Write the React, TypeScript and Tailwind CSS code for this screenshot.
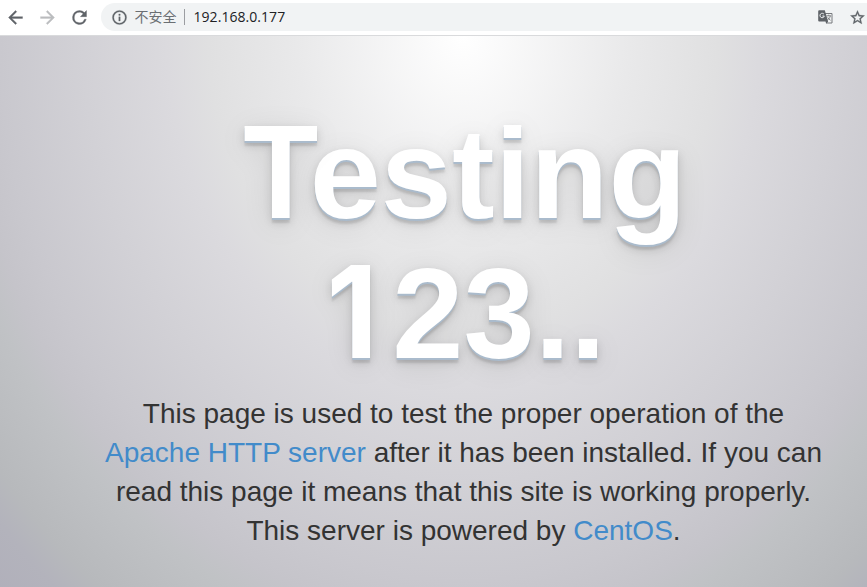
import React from "react";

function ArrowIcon({ forward = false }: { forward?: boolean }) {
  return (
    <svg
      viewBox="0 0 24 24"
      className={forward ? "h-[21px] w-[21px] rotate-180 fill-[#bbbdbf] stroke-[#bbbdbf]" : "h-[21px] w-[21px] fill-[#5f6368] stroke-[#5f6368]"}
      strokeWidth=".4"
    >
      <path d="M20 11H7.83l5.59-5.59L12 4l-8 8 8 8 1.41-1.41L7.83 13H20v-2z" />
    </svg>
  );
}

function ReloadIcon() {
  return (
    <svg viewBox="0 0 24 24" className="h-[21px] w-[21px] fill-[#5f6368] stroke-[#5f6368]" strokeWidth=".4">
      <path d="M17.65 6.35A7.96 7.96 0 0 0 12 4a8 8 0 1 0 7.73 10h-2.08A6 6 0 1 1 12 6c1.66 0 3.14.69 4.22 1.78L13 11h7V4l-2.35 2.35z" />
    </svg>
  );
}

function InfoIcon() {
  return (
    <svg viewBox="0 0 24 24" className="h-[17px] w-[17px] fill-[#5f6368] stroke-[#5f6368]" strokeWidth=".4">
      <path d="M11 17h2v-6h-2v6zm1-15a10 10 0 1 0 0 20 10 10 0 0 0 0-20zm0 18a8 8 0 1 1 0-16 8 8 0 0 1 0 16zM11 9h2V7h-2v2z" />
    </svg>
  );
}

function TranslateIcon() {
  return (
    <svg viewBox="0 0 16 16" className="h-4 w-4">
      <path d="M7 4.5h7v9.5H9" fill="none" stroke="#77797d" />
      <path d="M8.5 6.8h4.5M10.7 5.7v1M12.3 7c-.5 2-1.6 3.2-3 4.2M9.8 8.4c.6 1.2 1.4 2.2 2.7 2.9" fill="none" stroke="#77797d" strokeWidth=".9" />
      <path d="M1.2 1.2h5.6l3.3 11.2H1.2a1 1 0 0 1-1-1v-9.2a1 1 0 0 1 1-1zM7.5 12.4h2.6L8.3 15z" fill="#5f6368" />
      <path d="M6 5.3A2.2 2.2 0 1 0 6.3 7H4.4" fill="none" stroke="#f1f3f4" strokeWidth="1" />
    </svg>
  );
}

function StarIcon() {
  return (
    <svg viewBox="0 0 24 24" className="h-[17px] w-[17px] shrink-0 fill-[#5f6368] stroke-[#5f6368]" strokeWidth=".4">
      <path d="M22 9.24l-7.19-.62L12 2 9.19 8.63 2 9.24l5.46 4.73L5.82 21 12 17.27 18.18 21l-1.63-7.03L22 9.24zM12 15.4l-3.76 2.27 1-4.28-3.32-2.88 4.38-.38L12 6.1l1.71 4.04 4.38.38-3.32 2.88 1 4.28L12 15.4z" />
    </svg>
  );
}

function Toolbar() {
  return (
    <header className="flex h-9 items-start border-b border-[#d9dadc] bg-white pt-[3px]">
      <nav className="flex h-7 w-[101px] shrink-0 items-center gap-[11px] pl-[4.5px]">
        <ArrowIcon />
        <ArrowIcon forward />
        <ReloadIcon />
      </nav>
      <div className="flex h-7 flex-1 items-center rounded-l-full bg-[#f1f3f4] pl-[9.5px] pr-px">
        <InfoIcon />
        <span className="ml-[7px] -mt-0.5 font-['Noto_Sans_CJK_SC',sans-serif] text-[14px] leading-5 text-[#6b6f73]">不安全</span>
        <span className="ml-[7px] h-4 w-px bg-[#9b9da1]" />
        <span className="ml-[9px] flex-1 font-['Open_Sans',sans-serif] text-[14px] leading-5 tracking-[0.05px] text-[#202124]">192.168.0.177</span>
        <TranslateIcon />
        <span className="ml-[15px] flex">
          <StarIcon />
        </span>
      </div>
    </header>
  );
}

export default function App() {
  return (
    <div className="flex h-[587px] w-[867px] flex-col overflow-hidden font-['Liberation_Sans',Arial,sans-serif]">
      <Toolbar />
      <main className="flex flex-1 flex-col items-center bg-[radial-gradient(463px_545px_at_463px_0px,#ffffff_0%,#e9e9ea_36%,#e0e0e1_55%,#dbdade_64%,#c9c8ce_100%,#c5c4ca_107%,#c0c2c5_113%,#b7b9bc_128%,#b3b3bc_134%,#b0afba_145%)] pl-[60px] pt-[68px] text-center">
        <h1 className="h-[280px] w-[600px] text-[128px] font-bold leading-[140px] text-white [text-shadow:0_2px_0_#aabbcc,0_4px_10px_rgba(0,0,0,0.15),0_5px_2px_rgba(0,0,0,0.1),0_6px_30px_rgba(0,0,0,0.1)]">
          <span className="block h-[140px]">
            <span className="-mr-[9px] inline-block origin-[100%_77%] scale-x-[0.96] scale-y-[1.04]">T</span>esting
          </span>
          <span className="flex h-[140px] justify-center">
            <span className="-mt-0.5 w-[71px] origin-left scale-x-[0.93] pr-[10px] text-right font-['Inter',sans-serif]">1</span>
            <span>23..</span>
          </span>
        </h1>
        <p className="mt-2.5 w-[740px] text-[28px] leading-[39px] text-[#333333]">
          This page is used to test the proper operation of the <a className="text-[#428bca]">Apache HTTP server</a> after it has been installed. If you can read this page it means that this site is working properly. This server is powered by <a className="text-[#428bca]">CentOS</a>.
        </p>
      </main>
    </div>
  );
}
